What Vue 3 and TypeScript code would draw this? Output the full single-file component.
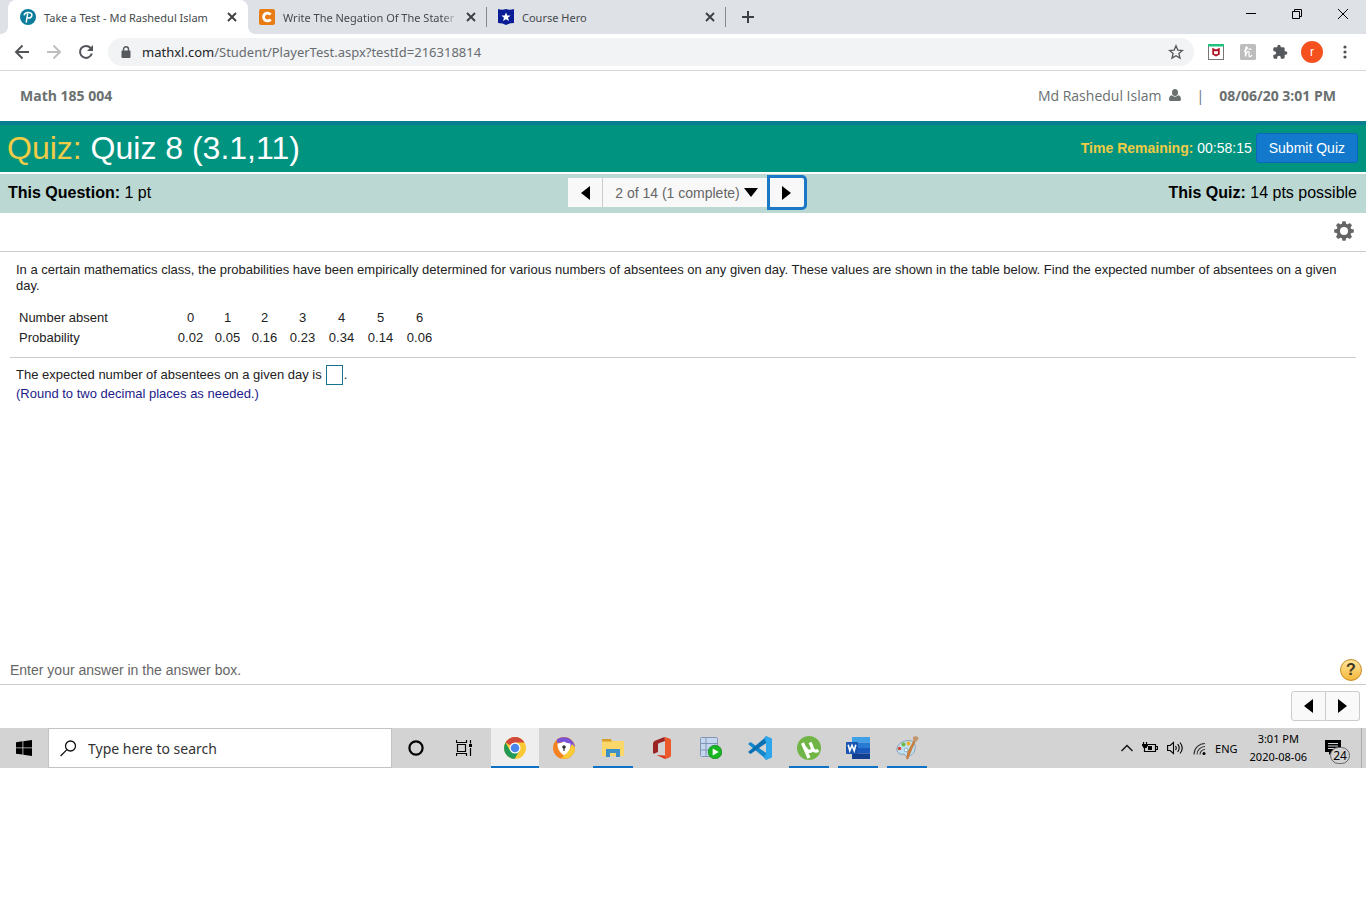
<script setup lang="ts">
import { ref } from 'vue'

interface Column {
  count: number
  probability: string
}

const columns: Column[] = [
  { count: 0, probability: '0.02' },
  { count: 1, probability: '0.05' },
  { count: 2, probability: '0.16' },
  { count: 3, probability: '0.23' },
  { count: 4, probability: '0.34' },
  { count: 5, probability: '0.14' },
  { count: 6, probability: '0.06' },
]

const answer = ref('')
const search = ref('')
const address = ref('/Student/PlayerTest.aspx?testId=216318814')
</script>

<template>
  <div class="screen">
    <div class="tab-strip">
      <div class="tab active">
        <svg class="favicon" viewBox="0 0 16 16" aria-hidden="true">
          <circle cx="8" cy="8" r="8" fill="#0b7c9c" />
          <path d="M6.300 13 7.600 5M4.200 5.800C5 3.900 7.200 3.200 9 3.500c2.300.3 3.300 1.800 2.800 3.300C11.300 8.700 9.500 9.300 7.600 8.900" fill="none" stroke="#fff" stroke-width="1.500" stroke-linecap="round" />
        </svg>
        <span class="tab-title">Take a Test - Md Rashedul Islam</span>
        <button class="close" type="button" aria-label="Close tab">
          <svg viewBox="0 0 10 10"><path d="M1 1l8 8M9 1l-8 8" stroke="#3c4043" stroke-width="1.900" /></svg>
        </button>
      </div>
      <div class="tab">
        <svg class="favicon" viewBox="0 0 16 16" aria-hidden="true">
          <rect width="16" height="16" rx="2" fill="#e87b14" />
          <path d="M11.600 5.700A3.900 3.900 0 1 0 11.600 10.300" fill="none" stroke="#fff" stroke-width="2.800" />
        </svg>
        <span class="tab-title fade">Write The Negation Of The Stater</span>
        <button class="close" type="button" aria-label="Close tab">
          <svg viewBox="0 0 10 10"><path d="M1 1l8 8M9 1l-8 8" stroke="#3c4043" stroke-width="1.900" /></svg>
        </button>
      </div>
      <div class="tab">
        <svg class="favicon" viewBox="0 0 16 16" aria-hidden="true">
          <path d="M0 0q4 1.500 8 0q4 1.500 8 0v14q-5 0-8 2q-3-2-8-2z" fill="#0a1c96" />
          <path d="M8 3.400l1.300 3.200h3.300L10 8.700l1 3.400L8 10.200 5 12.100l1-3.400-2.600-2.100h3.300z" fill="#fff" />
        </svg>
        <span class="tab-title">Course Hero</span>
        <button class="close" type="button" aria-label="Close tab">
          <svg viewBox="0 0 10 10"><path d="M1 1l8 8M9 1l-8 8" stroke="#3c4043" stroke-width="1.900" /></svg>
        </button>
      </div>
      <button class="new-tab" type="button" aria-label="New tab">
        <svg width="12" height="12" viewBox="0 0 12 12"><path d="M6 0v12M0 6h12" stroke="#3c4043" stroke-width="2" /></svg>
      </button>
      <div class="window-buttons">
        <button type="button" aria-label="Minimize">
          <svg width="10" height="10" viewBox="0 0 10 10"><path d="M0 4.500h10" stroke="#000" /></svg>
        </button>
        <button type="button" aria-label="Restore">
          <svg width="10" height="10" viewBox="0 0 10 10"><path d="M.5 2.500h7v7h-7zM2.500 2.500v-2h7v7h-2" fill="none" stroke="#000" /></svg>
        </button>
        <button type="button" aria-label="Close">
          <svg width="10" height="10" viewBox="0 0 10 10"><path d="M0 0l10 10M10 0L0 10" stroke="#000" /></svg>
        </button>
      </div>
    </div>

    <div class="toolbar">
      <button class="tool" type="button" aria-label="Back">
        <svg width="16" height="16" viewBox="0 0 16 16"><path d="M15 8H2.500M8.500 1.500L2 8l6.500 6.500" fill="none" stroke="#505357" stroke-width="1.900" /></svg>
      </button>
      <button class="tool" type="button" aria-label="Forward">
        <svg width="16" height="16" viewBox="0 0 16 16"><path d="M1 8h12.500M7.500 1.500L14 8l-6.500 6.500" fill="none" stroke="#bdbfc1" stroke-width="1.900" /></svg>
      </button>
      <button class="tool" type="button" aria-label="Reload">
        <svg width="16" height="16" viewBox="0 0 16 16"><path d="M13.800 9.500A6 6 0 1 1 12.600 4" fill="none" stroke="#505357" stroke-width="2" /><path d="M15 1v6H9z" fill="#505357" /></svg>
      </button>
      <div class="address">
        <svg width="10" height="13" viewBox="0 0 10 13" aria-hidden="true">
          <path d="M2.500 5V3.300a2.500 2.500 0 0 1 5 0V5" fill="none" stroke="#55585c" stroke-width="1.400" />
          <rect x="0.500" y="4.500" width="9" height="7.500" rx="1" fill="#55585c" />
        </svg>
        <span class="host">mathxl.com</span>
        <input v-model="address" type="text" aria-label="Address" />
        <button type="button" aria-label="Bookmark this page">
          <svg width="16" height="16" viewBox="0 0 16 16"><path d="M8 1.800l1.800 4.300 4.700.4-3.600 3 1.100 4.600L8 11.700l-4 2.400 1.100-4.600-3.600-3 4.700-.4z" fill="none" stroke="#55585c" stroke-width="1.300" /></svg>
        </button>
      </div>
      <div class="extensions">
        <button type="button" aria-label="McAfee">
          <svg width="16" height="16" viewBox="0 0 16 16"><rect x=".5" y=".5" width="15" height="15" fill="#fff" stroke="#777" /><path d="M0 0h16v2.500H0z" fill="#22c283" /><path d="M5.200 5.200v4.800L8 11.500l2.800-1.500V5.200L8 6.500z" fill="none" stroke="#b01525" stroke-width="1.900" /></svg>
        </button>
        <button type="button" aria-label="Honey">
          <svg width="16" height="16" viewBox="0 0 16 16"><rect width="16" height="16" rx="1.500" fill="#bdbdbd" /><path d="M4 7C7 6.500 8 3 6.600 3 5.400 3 5.500 8 5.500 12.500 6 9.500 7.500 7.500 8.700 7.700c1.400.3-.7 4.300.8 4.900 1 .2 1.800-.6 2.300-1.600M8.500 5.200h3" fill="none" stroke="#fff" stroke-width="1.300" /></svg>
        </button>
        <button type="button" aria-label="Extensions">
          <svg width="16" height="16" viewBox="0 0 24 24"><path fill="#55585c" d="M20.500 11H19V7c0-1.100-.9-2-2-2h-4V3.500a2.500 2.500 0 0 0-5 0V5H4c-1.100 0-2 .9-2 2v3.800h1.500a2.700 2.700 0 0 1 0 5.400H2V20c0 1.100.9 2 2 2h3.800v-1.500a2.700 2.700 0 0 1 5.400 0V22H17c1.100 0 2-.9 2-2v-4h1.500a2.500 2.500 0 0 0 0-5z" /></svg>
        </button>
        <button class="avatar" type="button" aria-label="Profile">r</button>
        <button class="dots" type="button" aria-label="Menu">
          <svg width="4" height="14" viewBox="0 0 4 14"><g fill="#505357"><circle cx="2" cy="2" r="1.600" /><circle cx="2" cy="7" r="1.600" /><circle cx="2" cy="12" r="1.600" /></g></svg>
        </button>
      </div>
    </div>

    <header class="course">
      <strong>Math 185 004</strong>
      <div class="user">
        <span>Md Rashedul Islam</span>
        <svg width="12" height="12" viewBox="0 0 12 12" aria-hidden="true"><ellipse cx="6" cy="3.500" rx="3" ry="3.500" fill="#6a7070" /><path d="M2.600 6.300Q6 9 9.400 6.300 12 7 12 10.500 11.800 12 10.500 12h-9Q.2 12 0 10.500 0 7 2.600 6.300z" fill="#6a7070" /></svg>
        <span class="bar">|</span>
        <strong>08/06/20 3:01 PM</strong>
      </div>
    </header>

    <div class="quiz-bar">
      <h1><span>Quiz:</span> Quiz 8 (3.1,11)</h1>
      <div class="timer">
        <p><strong>Time Remaining:</strong> 00:58:15</p>
        <button type="button">Submit Quiz</button>
      </div>
    </div>

    <div class="question-bar">
      <p><strong>This Question:</strong> 1 pt</p>
      <nav class="pager">
        <button type="button" aria-label="Previous question"><svg width="9" height="14" viewBox="0 0 9 14"><path d="M9 0v14L0 7z" /></svg></button>
        <button class="pager-list" type="button">2 of 14 (1 complete)<svg width="14" height="9" viewBox="0 0 14 9"><path d="M0 0h14L7 9z" /></svg></button>
        <button class="focused" type="button" aria-label="Next question"><svg width="9" height="14" viewBox="0 0 9 14"><path d="M0 0v14l9-7z" /></svg></button>
      </nav>
      <p class="right"><strong>This Quiz:</strong> 14 pts possible</p>
    </div>

    <div class="settings">
      <button type="button" aria-label="Settings">
        <svg width="20" height="20" viewBox="-10 -10 20 20"><g fill="#666"><g v-for="n in 4" :key="n" :transform="`rotate(${n * 45})`"><path d="M-2.300-6.500L-1.500-9.800h3l.8 3.300v13L1.500 9.800h-3L-2.300 6.500z" /></g><circle r="7.400" /></g><circle r="4" fill="#fff" /></svg>
      </button>
    </div>

    <main class="question">
      <p class="prompt">In a certain mathematics class, the probabilities have been empirically determined for various numbers of absentees on any given day. These values are shown in the table below. Find the expected number of absentees on a given day.</p>
      <table>
        <colgroup>
          <col class="label-col" />
          <col v-for="c in columns" :key="c.count" :class="c.count < 3 ? 'narrow' : 'wide'" />
        </colgroup>
        <tbody>
          <tr>
            <th scope="row">Number absent</th>
            <td v-for="c in columns" :key="c.count">{{ c.count }}</td>
          </tr>
          <tr>
            <th scope="row">Probability</th>
            <td v-for="c in columns" :key="c.count">{{ c.probability }}</td>
          </tr>
        </tbody>
      </table>
      <hr />
      <div class="answer">
        <label for="answer">The expected number of absentees on a given day is</label>
        <input id="answer" v-model="answer" type="text" /><span>.</span>
      </div>
      <p class="hint">(Round to two decimal places as needed.)</p>
    </main>

    <div class="help-row">
      <p>Enter your answer in the answer box.</p>
      <button type="button" aria-label="Help">?</button>
    </div>
    <div class="bottom-nav">
      <button type="button" aria-label="Previous"><svg width="9" height="14" viewBox="0 0 9 14"><path d="M9 0v14L0 7z" /></svg></button>
      <button type="button" aria-label="Next"><svg width="9" height="14" viewBox="0 0 9 14"><path d="M0 0v14l9-7z" /></svg></button>
    </div>

    <footer class="taskbar">
      <button class="start" type="button" aria-label="Start">
        <svg width="16" height="16" viewBox="0 0 16 16"><path d="M0 2.300L6.500 1.300V7.500H0zM7.300 1.200L16 0v7.500H7.300zM0 8.300h6.500v6.300L0 13.700zM7.300 8.300H16V16L7.300 14.800z" /></svg>
      </button>
      <label class="search">
        <svg width="17" height="17" viewBox="0 0 17 17" aria-hidden="true"><circle cx="10.500" cy="6" r="5" fill="none" stroke="#111" stroke-width="1.300" /><path d="M6.900 9.600L.6 16" stroke="#111" stroke-width="1.300" /></svg>
        <input v-model="search" type="text" placeholder="Type here to search" aria-label="Search" />
      </label>
      <div class="apps">
        <button class="app" type="button" aria-label="Cortana">
          <svg width="16" height="16" viewBox="0 0 16 16"><circle cx="8" cy="8" r="6.600" fill="none" stroke="#000" stroke-width="2.200" /></svg>
        </button>
        <button class="app" type="button" aria-label="Task view">
          <svg width="18" height="16" viewBox="0 0 18 16"><path d="M.5 0v2.500h10V0M.5 16v-2.500h10V16M1.500 4.500h8v7h-8zM14.500 0v3.500M14.500 8v8" fill="none" stroke="#000" stroke-width="1.200" /><path d="M13 4h3v3h-3z" /></svg>
        </button>
        <button class="app current" type="button" aria-label="Chrome">
          <svg width="22" height="22" viewBox="0 0 22 22"><circle cx="11" cy="11" r="11" fill="#fbc934" /><path d="M11 11L1.500 5.500A11 11 0 0 1 20.500 5.500H11z" fill="#d2483d" /><path d="M1.500 5.500A11 11 0 0 0 10.500 22L15.500 13.500 11 11 6.200 13.800z" fill="#229a57" /><circle cx="11" cy="11" r="5.500" fill="#fff" /><circle cx="11" cy="11" r="4.300" fill="#4b86ea" /></svg>
        </button>
        <button class="app" type="button" aria-label="Secure browser">
          <svg width="22" height="22" viewBox="0 0 22 22"><circle cx="11" cy="11" r="11" fill="#f58220" /><path d="M4 2.500C10-2 20 0 22 10L19 14 11 5 4 6z" fill="#7950d8" /><path d="M22 10C22.500 18 15 23 8 21.500L14 16 19 7z" fill="#f7cc35" /><path d="M4.500 6.500Q8 6.500 11 4.500 14 6.500 17.500 6.500 18 14 11 18.500 4 14 4.500 6.500z" fill="#fff" /><circle cx="11" cy="10" r="1.800" fill="#333" /><path d="M10.400 10h1.200v4h-1.200z" fill="#333" /></svg>
        </button>
        <button class="app open" type="button" aria-label="File Explorer">
          <svg width="22" height="18" viewBox="0 0 22 18"><path d="M0 1h9l1.500 1H22v15H0z" fill="#fbd669" /><path d="M0 0h9l1 2.500H0z" fill="#d79e28" /><path d="M4 18v-8h14v8h-4v-4H8v4z" fill="#3b91c7" /></svg>
        </button>
        <button class="app" type="button" aria-label="Office">
          <svg width="18" height="22" viewBox="0 0 18 22"><path d="M11.500 0L2 3.700Q0 4.700 0 6.500v9Q0 17 1.500 16.500L5 15V7.500Q5 6.300 6.300 5.900L12 4z" fill="#9c2323" /><path d="M3.500 18L12 18.500V4l-.5-4L16.500 1.800Q18 2.400 18 4v14q0 1.600-1.500 2.200L12 22z" fill="#d83b1d" /><path d="M12 0.200L16.500 1.800Q18 2.400 18 4v14q0 1.600-1.500 2.200L12 22z" fill="#ec5a2c" /></svg>
        </button>
        <button class="app" type="button" aria-label="Database">
          <svg width="22" height="22" viewBox="0 0 22 22"><rect x=".5" y=".5" width="17" height="19" rx="1" fill="#c5d7ef" stroke="#8396b5" /><path d="M1 6.500h17M1 13h17M6 1v18" stroke="#8095b7" /><circle cx="15" cy="15" r="6.800" fill="#16b620" stroke="#10811a" stroke-width=".7" /><path d="M12.700 11.500v7l6-3.500z" fill="#fff" /></svg>
        </button>
        <button class="app" type="button" aria-label="Visual Studio Code">
          <svg width="24" height="24" viewBox="0 0 24 24"><path d="M0 8l2.500-2L19 17.500V24z" fill="#1588cc" /><path d="M0 16l2.500 2L19 6.500V0z" fill="#0870b3" /><path d="M18 0l6 2.500v19L18 24l-2-2 2-4V6l-2-4z" fill="#2da6eb" /></svg>
        </button>
        <button class="app open" type="button" aria-label="uTorrent">
          <svg width="24" height="24" viewBox="0 0 24 24"><circle cx="12" cy="12" r="12" fill="#72b547" /><path d="M5.500 7L12 22M8 11.500q2.500 5 6 3.500 3-1.500-1-8.500M15 11.500q1.500 5 6.500 3" fill="none" stroke="#fff" stroke-width="3.200" /></svg>
        </button>
        <button class="app open" type="button" aria-label="Word">
          <svg width="24" height="22" viewBox="0 0 24 22"><path d="M6 0h18v5.500H6z" fill="#3f9fe7" /><path d="M6 5.500h18V11H6z" fill="#287bd2" /><path d="M6 11h18v5.500H6z" fill="#195abc" /><path d="M6 16.500h18V22H6z" fill="#123f8f" /><rect y="5" width="12" height="12" rx="1" fill="#1955b0" /><path d="M2.200 7.800l1.600 6L6 8.300l2.200 5.500 1.600-6" fill="none" stroke="#fff" stroke-width="1.600" /></svg>
        </button>
        <button class="app open" type="button" aria-label="Paint">
          <svg width="24" height="24" viewBox="0 0 24 24"><path d="M10 5C20 2 22 11 19 16c-2 4-8 6-9 3-1-2-3 0-5-1-6-3-3-11 5-13z" fill="#c2dff0" stroke="#7597ab" stroke-width=".8" /><circle cx="4.500" cy="12.500" r="1.800" fill="#d74731" /><circle cx="8.500" cy="8.500" r="2" fill="#69b73e" /><circle cx="13.500" cy="7.500" r="2" fill="#edae26" /><circle cx="11" cy="14" r="1.800" fill="#f4f9fc" stroke="#6498b7" stroke-width=".7" /><path d="M20 4L12 23l1.500-7z" stroke="#c67e3d" stroke-width="2" fill="#c67e3d" /><path d="M18 1l3-1 3 2-3 4-3-1z" fill="#c39770" /></svg>
        </button>
      </div>
      <div class="tray">
        <svg width="12" height="8" viewBox="0 0 12 8"><path d="M.5 7L6 1.500 11.500 7" fill="none" stroke="#111" stroke-width="1.400" /></svg>
        <svg width="16" height="12" viewBox="0 0 16 12"><path d="M5.500 2.500h8v7h-9M13.500 4.500h2v3h-2M2.500 6v3.500h2.500M1.500 0v2.500M4.500 0v2.500" fill="none" stroke="#000" stroke-width="1.200" /><path d="M0 2h6v1.500L4.500 6h-3L0 3.500zM6 4h4v4H6z" /></svg>
        <svg width="17" height="14" viewBox="0 0 17 14"><path d="M.6 4.500h2.500L6.500 1.500v11L3.100 9.500H.6zM8.500 5q1.500 2 0 4M10.700 3.200q3 3.800 0 7.600M13 1.500q4.500 5.500 0 11" fill="none" stroke="#000" stroke-width="1.100" /></svg>
        <svg width="13" height="13" viewBox="0 0 13 13"><g fill="none" stroke="#333" stroke-width="1.100"><path d="M1 12.500A11 11 0 0 1 12 1.500M4 12.500a8 8 0 0 1 8-8M7 12.500a5 5 0 0 1 5-5" /></g><circle cx="11" cy="11.500" r="1.500" /></svg>
        <span>ENG</span>
        <div class="clock"><span>3:01 PM</span><span>2020-08-06</span></div>
        <button class="notifications" type="button" aria-label="Notifications">
          <svg width="16" height="16" viewBox="0 0 16 16"><path d="M0 0h16v12H7l-3 3v-3H0z" /><path d="M3 3.500h10M3 6h10M3 8.500h6" stroke="#d3d3d3" /></svg>
          <span class="badge">24</span>
        </button>
      </div>
    </footer>
  </div>
</template>

<style>
body {
  margin: 0;
  background: #fff;
}
</style>

<style scoped>
.screen {
  font-family: "Liberation Sans", Arial, sans-serif;
  font-size: 14px;
  color: #000;
}
* {
  box-sizing: border-box;
}
svg {
  display: block;
  flex: none;
}
p,
h1 {
  margin: 0;
}
button {
  display: flex;
  align-items: center;
  justify-content: center;
  padding: 0;
  border: 0;
  background: none;
  font: inherit;
  color: inherit;
}
input {
  padding: 0;
  border: 0;
  background: none;
  font: inherit;
  color: inherit;
  outline: none;
}

/* browser window */
.tab-strip {
  display: flex;
  height: 34px;
  padding-left: 8px;
  background: #dee1e6;
  font-family: "Noto Sans", "Open Sans", sans-serif;
  font-size: 11px;
  color: #45494d;
}
.tab {
  position: relative;
  display: flex;
  align-items: center;
  gap: 8px;
  width: 239px;
  padding: 0 11px;
}
.tab.active {
  width: 240px;
  padding-left: 12px;
  border-radius: 8px 8px 0 0;
  background: #fff;
}
.tab.active::before,
.tab.active::after {
  content: "";
  position: absolute;
  bottom: 0;
  width: 8px;
  height: 8px;
}
.tab.active::before {
  left: -8px;
  background: radial-gradient(circle at 0 0, transparent 8px, #fff 8px);
}
.tab.active::after {
  right: -8px;
  background: radial-gradient(circle at 100% 0, transparent 8px, #fff 8px);
}
.tab:not(.active)::after {
  content: "";
  position: absolute;
  right: 0;
  top: 7px;
  width: 1px;
  height: 20px;
  background: #85888c;
}
.favicon {
  width: 16px;
  height: 16px;
}
.tab-title {
  flex: 1;
  white-space: nowrap;
}
.fade {
  mask-image: linear-gradient(to left, transparent, #000 16px);
}
.close {
  width: 10px;
  height: 10px;
}
.close svg {
  width: 10px;
  height: 10px;
}
.new-tab {
  width: 44px;
}
.window-buttons {
  display: flex;
  margin-left: auto;
  height: 28px;
}
.window-buttons button {
  width: 46px;
}
.toolbar {
  display: flex;
  align-items: center;
  height: 37px;
  padding: 0 12px 0 6px;
  border-bottom: 1px solid #d6d8da;
}
.tool {
  width: 32px;
  height: 32px;
}
.address {
  flex: 1;
  display: flex;
  align-items: center;
  height: 28px;
  margin-left: 6px;
  padding: 0 10px 0 13px;
  border-radius: 14px;
  background: #f1f3f4;
  font-family: "Noto Sans", "Open Sans", sans-serif;
  font-size: 13px;
  color: #686c70;
}
.host {
  margin-left: 11px;
  color: #222427;
}
.address input {
  flex: 1;
  min-width: 0;
}
.extensions {
  display: flex;
  align-items: center;
  gap: 16px;
  margin-left: 14px;
}
.avatar {
  width: 22px;
  height: 22px;
  margin: 0 -3px;
  border-radius: 50%;
  background: #f4511e;
  color: #fff;
  font-size: 12px;
}
.dots {
  width: 18px;
}

/* course header */
.course {
  display: flex;
  align-items: center;
  justify-content: space-between;
  height: 50px;
  padding: 0 30px 2px 20px;
  font-family: "Open Sans", "Noto Sans", sans-serif;
  font-size: 14px;
  color: #6a7070;
}
.user {
  display: flex;
  align-items: center;
}
.user svg {
  margin-left: 8px;
}
.bar {
  margin: 0 15px;
}

/* quiz bands */
.quiz-bar {
  display: flex;
  align-items: center;
  justify-content: space-between;
  height: 51px;
  padding: 0 8px 2px 7px;
  border-top: 4px solid #0b7d90;
  background: #009380;
  color: #fff;
}
h1 {
  font-size: 32px;
  font-weight: 400;
  line-height: 40px;
}
h1 span,
.timer strong {
  color: #f0cb45;
}
.timer {
  display: flex;
  align-items: center;
  gap: 4px;
}
.timer button {
  height: 30px;
  padding: 0 12px;
  border: 1px solid #0b68b8;
  border-radius: 3px;
  background: #1279cc;
}
.question-bar {
  display: grid;
  grid-template-columns: 1fr auto 1fr;
  align-items: center;
  height: 39px;
  margin-top: 2px;
  padding: 0 9px 2px 8px;
  background: #bbd8d3;
  font-size: 16px;
}
.right {
  text-align: right;
}
.pager {
  display: flex;
  align-items: center;
  margin-left: 10px;
  font-size: 14px;
  color: #666;
}
.pager button {
  width: 34px;
  height: 29px;
  background: #f8f8f8;
}
.pager .pager-list {
  width: auto;
  gap: 4px;
  padding: 0 9px 0 12px;
  border-left: 1px solid #ccc;
}
.pager .focused {
  width: 40px;
  height: 35px;
  border: 3px solid #1b78c4;
  border-radius: 0 5px 5px 0;
}
.settings {
  display: flex;
  justify-content: flex-end;
  align-items: center;
  height: 39px;
  padding: 0 12px 2px 0;
  border-bottom: 1px solid #ccc;
}

/* question body */
.question {
  min-height: 404px;
  padding: 10px 10px 0;
  color: #222;
  font-size: 13px;
  line-height: 16px;
}
.prompt {
  padding: 0 6px;
}
table {
  margin: 14px 0 0 9px;
  border-collapse: collapse;
  table-layout: fixed;
  width: 420px;
}
.label-col {
  width: 153px;
}
.narrow {
  width: 37px;
}
.wide {
  width: 39px;
}
th,
td {
  height: 20px;
  padding: 0;
  font-weight: 400;
  text-align: center;
}
th {
  text-align: left;
}
hr {
  height: 1px;
  margin: 9px 0 7px;
  border: 0;
  background: #ccc;
}
.answer {
  display: flex;
  align-items: center;
  padding-left: 6px;
}
.answer input {
  width: 17px;
  height: 20px;
  margin: 0 1px 0 4px;
  border: 1px solid #16748f;
}
.hint {
  margin-top: 1px;
  padding-left: 6px;
  color: #1d1a8a;
}
.help-row {
  display: flex;
  align-items: center;
  justify-content: space-between;
  height: 29px;
  padding: 0 4px 0 10px;
  border-bottom: 1px solid #ccc;
  color: #666;
}
.help-row button {
  width: 22px;
  height: 22px;
  border: 1px solid #c78c25;
  border-radius: 50%;
  background: linear-gradient(#ffe69a, #f4b73c);
  color: #3f3522;
  font-size: 16px;
  font-weight: 700;
}
.bottom-nav {
  display: flex;
  justify-content: flex-end;
  padding: 6px 6px 7px;
}
.bottom-nav button {
  width: 35px;
  height: 30px;
  border: 1px solid #ccc;
  border-radius: 3px 0 0 3px;
  background: #f9f9f9;
}
.bottom-nav button + button {
  width: 34px;
  border-left: 0;
  border-radius: 0 3px 3px 0;
}

/* taskbar */
.taskbar {
  display: flex;
  height: 40px;
  background: #d3d3d3;
  font-family: "Noto Sans", "Open Sans", sans-serif;
}
.start {
  width: 48px;
}
.search {
  display: flex;
  align-items: center;
  gap: 11px;
  width: 344px;
  padding-left: 11px;
  border: 1px solid #c3c3c3;
  background: #fff;
}
.search input {
  flex: 1;
  min-width: 0;
}
.search input::placeholder {
  color: #333;
  opacity: 1;
}
.apps {
  display: flex;
  gap: 1px;
}
.app {
  width: 48px;
}
.app.open {
  background: linear-gradient(#1070c4, #1070c4) bottom / 40px 2px no-repeat;
}
.app.current {
  margin-left: 1px;
  border-bottom: 2px solid #1070c4;
  border-top: 2px solid #eee;
  background: #eee;
}
.tray {
  display: flex;
  align-items: center;
  gap: 9px;
  margin-left: auto;
  padding-right: 4px;
  font-size: 11px;
}
.clock {
  display: flex;
  flex-direction: column;
  align-items: center;
  margin-left: 3px;
  line-height: 18px;
}
.notifications {
  position: relative;
  width: 46px;
  height: 40px;
  padding-right: 12px;
  border-right: 1px solid #aaa;
}
.badge {
  position: absolute;
  right: 11px;
  bottom: 4px;
  width: 20px;
  height: 17px;
  border: 1px solid #666;
  border-radius: 9px;
  background: #d3d3d3;
  font-size: 12px;
  line-height: 15px;
}
</style>
